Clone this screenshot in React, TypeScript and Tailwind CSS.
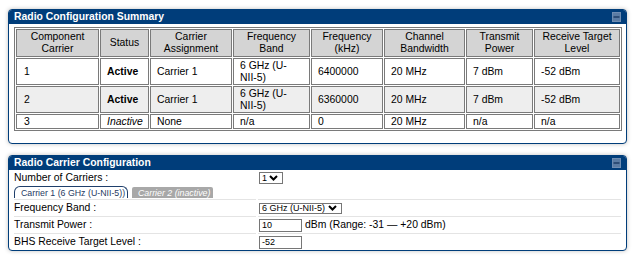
import React from "react";

const font = { fontFamily: '"Liberation Sans", Arial, sans-serif' };

const columns = [
  { label: "Component Carrier", width: "w-[83px]" },
  { label: "Status", width: "w-[49px]" },
  { label: "Carrier Assignment", width: "w-[82px]" },
  { label: "Frequency Band", width: "w-[77px]" },
  { label: "Frequency (kHz)", width: "w-[72px]" },
  { label: "Channel Bandwidth", width: "w-[81px]" },
  { label: "Transmit Power", width: "w-[67px]" },
  { label: "Receive Target Level", width: "w-[86px]" },
];

const rows = [
  { id: "1", status: "Active", carrier: "Carrier 1", band: "6 GHz (U-NII-5)", freq: "6400000", bw: "20 MHz", power: "7 dBm", target: "-52 dBm" },
  { id: "2", status: "Active", carrier: "Carrier 1", band: "6 GHz (U-NII-5)", freq: "6360000", bw: "20 MHz", power: "7 dBm", target: "-52 dBm" },
  { id: "3", status: "Inactive", carrier: "None", band: "n/a", freq: "0", bw: "20 MHz", power: "n/a", target: "n/a" },
];

function MinimizeIcon() {
  return (
    <svg width="9" height="10" viewBox="0 0 9 10" className="block">
      <rect x="0" y="0" width="9" height="10" fill="#5b7ca4" />
      <rect x="0.5" y="0.5" width="8" height="9" fill="none" stroke="#6f8db2" />
      <rect x="1.5" y="4" width="6" height="2" fill="#2d4d76" />
    </svg>
  );
}

function Chevron() {
  return (
    <svg width="9" height="6" viewBox="0 0 9 6" className="block">
      <polyline points="1,1 4.5,4.5 8,1" fill="none" stroke="#000" strokeWidth="2" />
    </svg>
  );
}

function Panel({ title, children, className = "" }: { title: string; children: React.ReactNode; className?: string }) {
  return (
    <section className={`w-[619px] overflow-hidden rounded-[4px] border border-[#003d7a] bg-white shadow-[0_0_4px_rgba(0,0,0,0.25)] ${className}`}>
      <div className="flex h-[14px] items-start justify-between bg-[#003d7a] pl-[5px] pr-[5px]">
        <span className="text-[10.4px] font-bold leading-[14px] text-white">{title}</span>
        <span className="pt-[2px]">
          <MinimizeIcon />
        </span>
      </div>
      {children}
    </section>
  );
}

export default function App() {
  const cell = "border border-[#7a7a7a] px-[6px] py-[0.5px] text-left align-middle";
  return (
    <div style={font} className="h-[259px] w-[635px] bg-white pl-[8px] pt-[9px] text-[10.4px] leading-[12px] text-black">
      <Panel title="Radio Configuration Summary">
        <div className="px-[5px] pb-[12px] pt-[3px]">
          <table className="w-[607px] table-fixed border-separate border-spacing-[1px] border border-[#7a7a7a]">
            <thead>
              <tr>
                {columns.map((c) => (
                  <th key={c.label} className={`${c.width} border border-[#7a7a7a] bg-[#d4d4d4] px-[3px] py-[1px] text-center font-normal`}>
                    {c.label}
                  </th>
                ))}
              </tr>
            </thead>
            <tbody>
              {rows.map((r, i) => (
                <tr key={r.id} className={i === 1 ? "bg-[#eeeeee]" : "bg-white"}>
                  <td className={`${cell} pl-[7px]`}>{r.id}</td>
                  <td className={`${cell} text-center`}>
                    {r.status === "Active" ? <b>{r.status}</b> : <i>{r.status}</i>}
                  </td>
                  <td className={cell}>{r.carrier}</td>
                  <td className={cell}>{r.band}</td>
                  <td className={cell}>{r.freq}</td>
                  <td className={cell}>{r.bw}</td>
                  <td className={cell}>{r.power}</td>
                  <td className={cell}>{r.target}</td>
                </tr>
              ))}
            </tbody>
          </table>
        </div>
      </Panel>

      <Panel title="Radio Carrier Configuration" className="mt-[11px]">
        <div className="px-[5px]">
          <div className="grid grid-cols-[242px_1fr] gap-x-[2px]">
            <div className="flex h-[15px] items-center">Number of Carriers :</div>
            <div className="flex h-[15px] items-center pl-[1px]">
              <div className="flex h-[12px] w-[24px] items-center gap-[2px] border border-[#767676] pl-[2px] text-[9px]">
                <span>1</span>
                <Chevron />
              </div>
            </div>

            <div className="col-span-2 flex h-[14px] items-end gap-[4px] pb-[1px]">
              <div className="flex h-[12px] w-[114px] items-center rounded-t-[6px] border border-b-0 border-[#1f3f6b] pl-[6px] text-[8.8px] text-[#1f3b63]">
                Carrier 1 (6 GHz (U-NII-5))
              </div>
              <div className="flex h-[11px] w-[81px] items-center rounded-t-[2px] bg-[#a8a8a8] pl-[6px] text-[8.8px] italic text-white">
                Carrier 2 (inactive)
              </div>
            </div>

            <div className="flex h-[17px] items-center border-t border-[#e4e4e4]">Frequency Band :</div>
            <div className="flex h-[17px] items-center border-t border-[#e4e4e4] pl-[1px]">
              <div className="flex h-[11px] w-[83px] items-center gap-[3px] border border-[#767676] pl-[2px] text-[9px]">
                <span>6 GHz (U-NII-5)</span>
                <Chevron />
              </div>
            </div>

            <div className="flex h-[17px] items-center border-t border-[#e4e4e4]">Transmit Power :</div>
            <div className="flex h-[17px] items-center border-t border-[#e4e4e4] pl-[1px]">
              <div className="flex h-[13px] w-[43px] items-center border border-[#767676] pl-[2px] text-[9px]">10</div>
              <span className="ml-[3px]">dBm (Range: -31 — +20 dBm)</span>
            </div>

            <div className="flex h-[17px] items-center border-t border-[#e4e4e4]">BHS Receive Target Level :</div>
            <div className="flex h-[17px] items-center border-t border-[#e4e4e4] pl-[1px]">
              <div className="flex h-[13px] w-[43px] items-center border border-[#767676] pl-[2px] text-[9px]">-52</div>
            </div>
          </div>
        </div>
      </Panel>
    </div>
  );
}
